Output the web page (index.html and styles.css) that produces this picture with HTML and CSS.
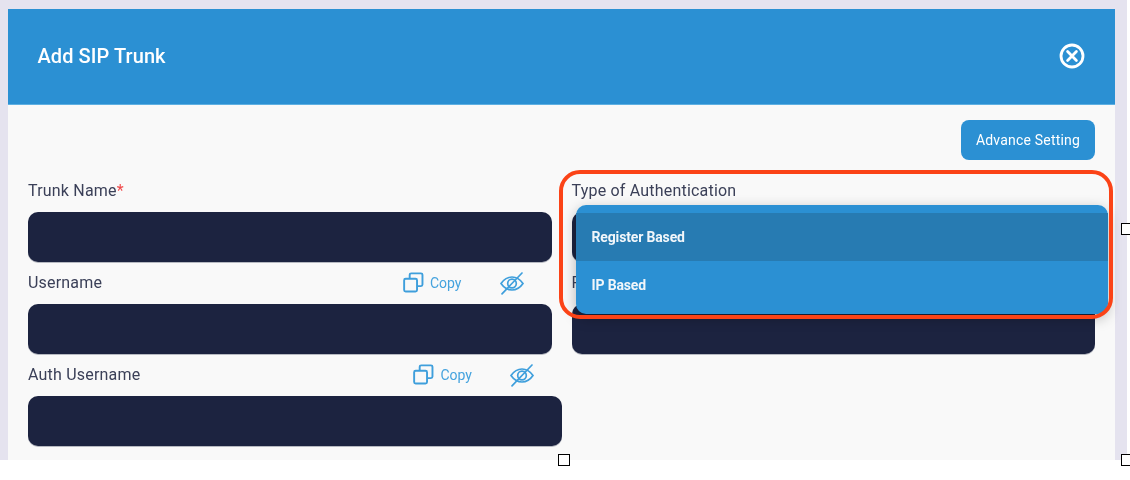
FILE: index.html
```html
<!DOCTYPE html>
<html lang="en">
<head>
<meta charset="utf-8">
<title>Add SIP Trunk</title>
<link rel="stylesheet" href="styles.css">
</head>
<body>
<div class="stage">
  <div class="modal">
    <header class="modal-head">
      <h1 class="modal-title">Add SIP Trunk</h1>
      <svg class="close-icon" viewBox="0 0 26 26" aria-label="Close"><circle cx="13" cy="13" r="11"/><path d="M8.6 8.6l8.8 8.8M17.4 8.6l-8.8 8.8"/></svg>
    </header>
    <div class="modal-body">
      <div class="actions"><button class="btn-advance">Advance Setting</button></div>
      <div class="form-row">
        <div class="field">
          <div class="label-row"><label class="label">Trunk Name<span class="req">*</span></label></div>
          <div class="input"></div>
        </div>
        <div class="field">
          <div class="label-row"><label class="label">Type of Authentication</label></div>
          <div class="input"></div>
        </div>
      </div>
      <div class="form-row">
        <div class="field">
          <div class="label-row">
            <label class="label">Username</label>
            <div class="tools">
              <span class="copy"><svg class="copy-icon" viewBox="0 0 22 22"><rect x="1.2" y="7" width="13.5" height="13.5" rx="1.6"/><path d="M7 7V3a1.6 1.6 0 0 1 1.6-1.6h10.2A1.6 1.6 0 0 1 20.4 3v10.2a1.6 1.6 0 0 1-1.6 1.6h-4.1"/></svg>Copy</span>
              <svg class="eye-icon" viewBox="0 0 24 24"><path d="M1 12.5C4 8.2 7.800 6 12 6s8 2.200 11 6.500C20 16.800 16.200 19 12 19S4 16.800 1 12.500z"/><circle cx="12" cy="12.500" r="4.300"/><path d="M2 22.800L22 2"/></svg>
            </div>
          </div>
          <div class="input"></div>
        </div>
        <div class="field">
          <div class="label-row"><label class="label">Password</label></div>
          <div class="input"></div>
        </div>
      </div>
      <div class="form-row">
        <div class="field field-wide">
          <div class="label-row">
            <label class="label">Auth Username</label>
            <div class="tools">
              <span class="copy"><svg class="copy-icon" viewBox="0 0 22 22"><rect x="1.2" y="7" width="13.5" height="13.5" rx="1.6"/><path d="M7 7V3a1.6 1.6 0 0 1 1.6-1.6h10.2A1.6 1.6 0 0 1 20.4 3v10.2a1.6 1.6 0 0 1-1.6 1.6h-4.1"/></svg>Copy</span>
              <svg class="eye-icon" viewBox="0 0 24 24"><path d="M1 12.5C4 8.2 7.800 6 12 6s8 2.200 11 6.500C20 16.800 16.200 19 12 19S4 16.800 1 12.500z"/><circle cx="12" cy="12.500" r="4.300"/><path d="M2 22.800L22 2"/></svg>
            </div>
          </div>
          <div class="input"></div>
        </div>
      </div>
    </div>
  </div>
  <ul class="menu">
    <li class="menu-item is-active">Register Based</li>
    <li class="menu-item">IP Based</li>
  </ul>
  <div class="callout"></div>
  <span class="handle handle-right"></span>
  <span class="handle handle-bottom"></span>
  <span class="handle handle-corner"></span>
</div>
</body>
</html>
```

FILE: styles.css
```css
* { box-sizing: border-box; }
html, body { margin: 0; padding: 0; background: #fff; }
body { font-family: Roboto, "Liberation Sans", sans-serif; width: 1130px; height: 480px; overflow: hidden; }

.stage {
  position: relative;
  width: 1127px;
  height: 460px;
  background: #e5e3ef;
  padding: 9px 12px 0 8px;
}
.modal { height: 451px; background: #f9f9f9; display: flex; flex-direction: column; filter: blur(.35px); }
.modal-head {
  height: 96px;
  flex: none;
  background: #2b90d3;
  border-bottom: 1px solid #5fb0e2;
  padding: 0 30px;
  display: flex;
  align-items: center;
  justify-content: space-between;
}
.modal-title { margin: 0 0 2px; color: #fff; font-size: 20px; font-weight: 500; letter-spacing: .08px; transform: translateX(-.5px); }
.close-icon { width: 26px; height: 26px; margin-bottom: 2px; fill: none; stroke: #fff; stroke-width: 2.8; stroke-linecap: round; }

.modal-body { padding: 15px 20px 0; display: flex; flex-direction: column; }
.actions { display: flex; justify-content: flex-end; height: 57px; }
.btn-advance {
  width: 134px;
  height: 40px;
  border: 0;
  border-radius: 8px;
  background: #2b90d3;
  color: #fff;
  font: 400 14px Roboto, sans-serif;
  letter-spacing: .2px;
}
.form-row { display: flex; gap: 20px; height: 92px; }
.field { width: 524px; display: flex; flex-direction: column; }
.field-wide { width: 534px; }
.label-row { height: 35px; padding-bottom: 8px; display: flex; align-items: center; justify-content: space-between; }
.label { color: #3b4058; font-size: 16px; letter-spacing: .2px; }
.req { color: #f0494a; }
.input { height: 50px; background: #1c2340; border-radius: 10px; box-shadow: 0 1px 0 rgba(28, 35, 64, .3); }

.tools { display: flex; align-items: center; gap: 38px; padding-right: 28px; }
.copy { display: flex; align-items: center; gap: 6px; color: #45a3de; font-size: 14px; }
.copy-icon { width: 21px; height: 21px; fill: none; stroke: #3f9fdc; stroke-width: 2; }
.eye-icon { width: 24px; height: 24px; fill: none; stroke: #3f9fdc; stroke-width: 1.7; stroke-linecap: round; }

.menu {
  position: absolute;
  left: 576px;
  top: 205px;
  width: 532px;
  height: 109px;
  margin: 0;
  padding: 8px 0 0;
  list-style: none;
  background: #2b90d3;
  border-radius: 10px;
  box-shadow: 0 4px 14px rgba(0, 0, 0, .28);
  filter: blur(.35px);
}
.menu-item {
  height: 48px;
  line-height: 48px;
  padding-left: 15.5px;
  color: #f1f6fa;
  font-size: 14px;
  font-weight: 700;
  letter-spacing: -.15px;
}
.is-active { background: #277bb2; }

.callout {
  position: absolute;
  left: 559px;
  top: 170px;
  width: 554px;
  height: 149px;
  border: 4px solid #fb4317;
  border-radius: 21px;
}
.handle { position: absolute; width: 12px; height: 12px; background: #fff; border: 1px solid #000; }
.handle-right { left: 1121px; top: 223px; }
.handle-bottom { left: 558px; top: 454px; }
.handle-corner { left: 1121px; top: 454px; }
```
